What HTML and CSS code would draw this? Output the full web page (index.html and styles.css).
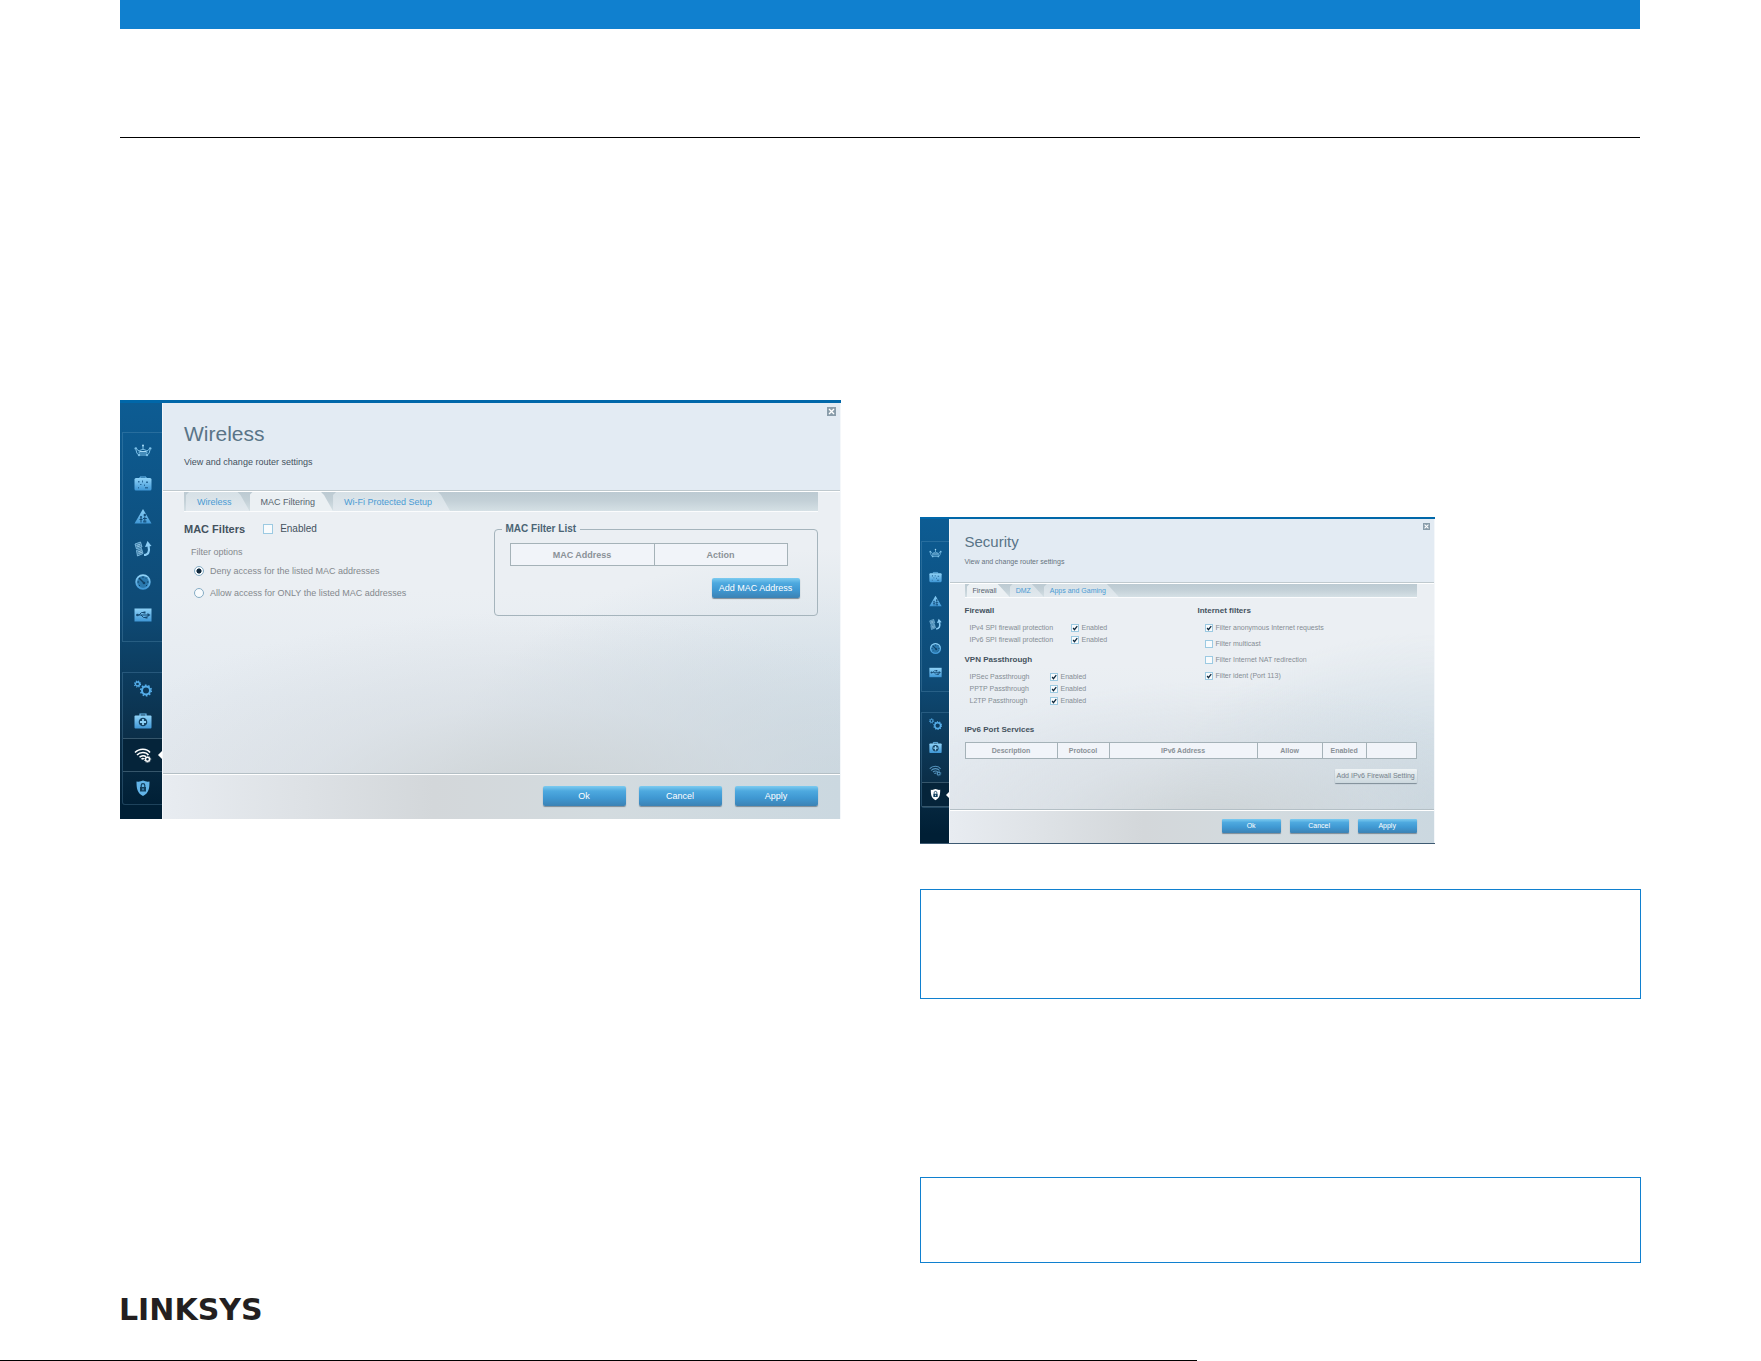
FILE: index.html
```html
<!DOCTYPE html>
<html lang="en">
<head>
  <meta charset="UTF-8">
  <meta name="viewport" content="width=device-width, initial-scale=1.0">
  <title>Linksys router settings</title>
  <link rel="stylesheet" href="styles.css">
</head>
<body>
  <!-- Sidebar icons, shared by both panels -->
  <svg class="sprite" aria-hidden="true">
    <defs>
      <linearGradient id="sky" x1="0" y1="0" x2="0" y2="1">
        <stop offset="0" stop-color="#8fd2f7"/>
        <stop offset="1" stop-color="#3f97d6"/>
      </linearGradient>
    </defs>
    <symbol id="icon-map" viewBox="0 0 18 18">
      <path d="M5.500 8.500Q9 6 12.500 8.500L13 11H5z" fill="none" stroke="#7cc0e8"/>
      <path d="M9 3v4M2.500 7l2.500 2M15.500 7L13 9M2 8l1 3.500 2.500 1.500M16 8l-1 3.500-2.500 1.500M5.500 13h7" fill="none" stroke="#7cc0e8"/>
      <path d="M6 9.500h6" stroke="#a5d8f5"/>
      <circle cx="9" cy="3.500" r="1" fill="#a5d8f5"/>
      <circle cx="1.800" cy="6.500" r="1.300" fill="#7cc0e8"/>
      <circle cx="16.200" cy="6.500" r="1.300" fill="#7cc0e8"/>
      <circle cx="5" cy="13" r="1.200" fill="#7cc0e8"/>
      <circle cx="13" cy="13" r="1.200" fill="#7cc0e8"/>
    </symbol>
    <symbol id="icon-guest" viewBox="0 0 18 18">
      <path d="M6 3.500V2h6v1.500" fill="none" stroke="#6fbdf0"/>
      <rect x="0.500" y="3" width="17" height="12.500" rx="1.500" fill="url(#sky)"/>
      <path d="M4 6h1.500v1.500H4zM8 5.500h1v2H8zM12 6.500h2V8h-2zM6 9h1.500v1H6zM10 9.500h1V11h-1zM4 12h1v1.500H4zM11 12h3v1.500h-3z" fill="#2a6c9d"/>
    </symbol>
    <symbol id="icon-parental" viewBox="0 0 18 18">
      <path d="M9 1L17.500 15.500H.500z" fill="url(#sky)"/>
      <circle cx="7" cy="9" r="1" fill="#124a75"/>
      <circle cx="10.800" cy="7" r="1.200" fill="#124a75"/>
      <path d="M7 10v4.500M5.500 11.500h3M10.800 8.500v6M9 10.500h3.800M9.800 14.500v-2M11.800 14.500v-2" stroke="#124a75" fill="none"/>
    </symbol>
    <symbol id="icon-media" viewBox="0 0 18 18">
      <path d="M1 4l5.500-2 1.500 5-5.500 2zM2.500 10.500l5-2 1.500 5-5.500 2.500z" fill="#3d7da8" stroke="#8cc8ec" stroke-width=".8"/>
      <path d="M2.500 5.500l3.500-1.300M3 7l3.500-1.300M4 12l3.500-1.300M4.500 13.500l3.500-1.300" stroke="#a9d9f5" stroke-width=".8"/>
      <path d="M10 15c4 0 6-3 4.500-9" fill="none" stroke="#8ccdf5" stroke-width="2.200"/>
      <path d="M13.500 1l4 5-6.500 1z" fill="#8ccdf5"/>
    </symbol>
    <symbol id="icon-speed" viewBox="0 0 18 18">
      <circle cx="9" cy="9" r="6.800" fill="#2a78ad" stroke="url(#sky)" stroke-width="1.800"/>
      <path d="M5 5l5 5" stroke="#0f4269" stroke-width="1.400"/>
      <path d="M9 3.500V5M3.500 9H5M13 9h1.500M12 5.500l1-1M5 13l1-1M12 13l1-1" stroke="#0f4269" fill="none"/>
      <circle cx="10" cy="10" r="1.300" fill="#0f4269"/>
    </symbol>
    <symbol id="icon-usb" viewBox="0 0 18 18">
      <path d="M.500 2.500h17v13H.500z" fill="url(#sky)"/>
      <path d="M2.500 9h12M5 9l2.500-2.500H10M7 9l2.500 2.500H12" stroke="#174d76" fill="none"/>
      <circle cx="3.500" cy="9" r="1.300" fill="#174d76"/>
      <path d="M13.500 7L16.500 9l-3 2zM9.500 5.500h2v2h-2zM11.500 10.500h2v2h-2z" fill="#174d76"/>
    </symbol>
    <symbol id="icon-gears" viewBox="0 0 18 18">
      <circle cx="3.500" cy="4" r="2" fill="none" stroke="#55aeea" stroke-width="1.300"/>
      <circle cx="3.500" cy="4" r="3" fill="none" stroke="#55aeea" stroke-width="1.200" stroke-dasharray="1.200 1.200"/>
      <circle cx="12" cy="10.500" r="4" fill="none" stroke="#55aeea" stroke-width="2"/>
      <circle cx="12" cy="10.500" r="5.300" fill="none" stroke="#55aeea" stroke-width="1.600" stroke-dasharray="1.660 1.660"/>
    </symbol>
    <symbol id="icon-help" viewBox="0 0 18 18">
      <path d="M6 4V2h6v2" fill="none" stroke="#6fbdf0" stroke-width="1.200"/>
      <rect x=".500" y="3.500" width="17" height="13" rx="1" fill="url(#sky)"/>
      <circle cx="9" cy="10" r="4.300" fill="#174566"/>
      <path d="M9 7v6M6 10h6" stroke="#8fd2f7" stroke-width="1.800"/>
    </symbol>
    <symbol id="icon-wifi" viewBox="0 0 18 18">
      <path d="M1 6.500c4-4.500 12-4.500 15 0M3 9c3-3.500 9-3.500 11.500 0M5.500 11.200c2-2 5-2 6.500-.500M7.500 13.300c.8-.8 1.800-.8 2.500-.300" fill="none" stroke="currentColor" stroke-width="1.500"/>
      <circle cx="13.500" cy="13.300" r="2" fill="none" stroke="currentColor" stroke-width="1.500"/>
      <circle cx="13.500" cy="13.300" r="3.200" fill="none" stroke="currentColor" stroke-width=".8" stroke-dasharray="1 1"/>
    </symbol>
    <symbol id="icon-shield" viewBox="0 0 18 18">
      <path d="M2.500 2.500Q6 3 9 1.500q3 1.500 6.500 1C15.500 9 15 14 9 17 3 14 2.500 9 2.500 2.500z" fill="currentColor"/>
      <rect x="6" y="8" width="6" height="4.500" fill="#12405f"/>
      <path d="M7.200 8V6.500a1.800 1.800 0 0 1 3.600 0V8" fill="none" stroke="#12405f" stroke-width="1.200"/>
      <path d="M9 9.300v2" stroke="currentColor"/>
    </symbol>
  </svg>

  <div class="page">
    <header class="page-header">
      <div class="bar"></div>
    </header>

    <main class="columns">
      <div class="column">
        <section class="panel">
          <nav class="sidebar" aria-label="Router menu">
            <div class="menu">
              <a href="#" aria-label="Network map"><svg><use href="#icon-map"/></svg></a>
              <a href="#" aria-label="Guest access"><svg><use href="#icon-guest"/></svg></a>
              <a href="#" aria-label="Parental controls"><svg><use href="#icon-parental"/></svg></a>
              <a href="#" aria-label="Media prioritization"><svg><use href="#icon-media"/></svg></a>
              <a href="#" aria-label="Speed test"><svg><use href="#icon-speed"/></svg></a>
              <a href="#" aria-label="USB storage"><svg><use href="#icon-usb"/></svg></a>
            </div>
            <div class="menu menu-settings">
              <a href="#" aria-label="Connectivity"><svg><use href="#icon-gears"/></svg></a>
              <a href="#" aria-label="Troubleshooting"><svg><use href="#icon-help"/></svg></a>
              <a href="#" class="active" aria-label="Wireless"><svg><use href="#icon-wifi"/></svg></a>
              <a href="#" aria-label="Security"><svg><use href="#icon-shield"/></svg></a>
            </div>
          </nav>
          <div class="content">
            <header class="content-header">
              <h2>Wireless</h2>
              <p>View and change router settings</p>
              <button class="close" aria-label="Close"><svg viewBox="0 0 9 9"><path d="M2 2l5 5M7 2L2 7"/></svg></button>
            </header>
            <div class="content-body">
              <div class="tabs">
                <button class="tab">Wireless</button>
                <button class="tab active">MAC Filtering</button>
                <button class="tab">Wi-Fi Protected Setup</button>
              </div>
              <div class="mac-grid">
                <div>
                  <div class="mac-title">
                    <h3>MAC Filters</h3>
                    <label><input type="checkbox"> Enabled</label>
                  </div>
                  <div class="filter-options">
                    <p>Filter options</p>
                    <label><input type="radio" name="filter" checked> Deny access for the listed MAC addresses</label>
                    <label><input type="radio" name="filter"> Allow access for ONLY the listed MAC addresses</label>
                  </div>
                </div>
                <fieldset>
                  <legend>MAC Filter List</legend>
                  <table class="mac-table">
                    <thead>
                      <tr><th class="col-address">MAC Address</th><th>Action</th></tr>
                    </thead>
                  </table>
                  <button class="btn btn-add">Add MAC Address</button>
                </fieldset>
              </div>
            </div>
            <footer class="content-footer">
              <button class="btn">Ok</button>
              <button class="btn">Cancel</button>
              <button class="btn">Apply</button>
            </footer>
          </div>
        </section>
      </div>

      <div class="column column-right">
        <section class="panel panel-small">
          <nav class="sidebar" aria-label="Router menu">
            <div class="menu">
              <a href="#" aria-label="Network map"><svg><use href="#icon-map"/></svg></a>
              <a href="#" aria-label="Guest access"><svg><use href="#icon-guest"/></svg></a>
              <a href="#" aria-label="Parental controls"><svg><use href="#icon-parental"/></svg></a>
              <a href="#" aria-label="Media prioritization"><svg><use href="#icon-media"/></svg></a>
              <a href="#" aria-label="Speed test"><svg><use href="#icon-speed"/></svg></a>
              <a href="#" aria-label="USB storage"><svg><use href="#icon-usb"/></svg></a>
            </div>
            <div class="menu menu-settings">
              <a href="#" aria-label="Connectivity"><svg><use href="#icon-gears"/></svg></a>
              <a href="#" aria-label="Troubleshooting"><svg><use href="#icon-help"/></svg></a>
              <a href="#" aria-label="Wireless"><svg><use href="#icon-wifi"/></svg></a>
              <a href="#" class="active" aria-label="Security"><svg><use href="#icon-shield"/></svg></a>
            </div>
          </nav>
          <div class="content">
            <header class="content-header">
              <h2>Security</h2>
              <p>View and change router settings</p>
              <button class="close" aria-label="Close"><svg viewBox="0 0 9 9"><path d="M2 2l5 5M7 2L2 7"/></svg></button>
            </header>
            <div class="content-body">
              <div class="tabs">
                <button class="tab active">Firewall</button>
                <button class="tab">DMZ</button>
                <button class="tab">Apps and Gaming</button>
              </div>
              <div class="security-grid">
                <div>
                  <h3>Firewall</h3>
                  <div class="options options-firewall">
                    <span>IPv4 SPI firewall protection</span>
                    <label><input type="checkbox" checked> Enabled</label>
                    <span>IPv6 SPI firewall protection</span>
                    <label><input type="checkbox" checked> Enabled</label>
                  </div>
                  <h3>VPN Passthrough</h3>
                  <div class="options">
                    <span>IPSec Passthrough</span>
                    <label><input type="checkbox" checked> Enabled</label>
                    <span>PPTP Passthrough</span>
                    <label><input type="checkbox" checked> Enabled</label>
                    <span>L2TP Passthrough</span>
                    <label><input type="checkbox" checked> Enabled</label>
                  </div>
                </div>
                <div>
                  <h3>Internet filters</h3>
                  <div class="filters">
                    <label><input type="checkbox" checked> Filter anonymous Internet requests</label>
                    <label><input type="checkbox"> Filter multicast</label>
                    <label><input type="checkbox"> Filter Internet NAT redirection</label>
                    <label><input type="checkbox" checked> Filter ident (Port 113)</label>
                  </div>
                </div>
              </div>
              <h3 class="services-title">IPv6 Port Services</h3>
              <table class="services">
                <colgroup>
                  <col class="col-description"><col class="col-protocol"><col>
                  <col class="col-allow"><col class="col-enabled"><col class="col-edit">
                </colgroup>
                <thead>
                  <tr><th>Description</th><th>Protocol</th><th>IPv6 Address</th><th>Allow</th><th>Enabled</th><th></th></tr>
                </thead>
              </table>
              <button class="btn btn-add btn-light">Add IPv6 Firewall Setting</button>
            </div>
            <footer class="content-footer">
              <button class="btn">Ok</button>
              <button class="btn">Cancel</button>
              <button class="btn">Apply</button>
            </footer>
          </div>
        </section>
        <div class="note"></div>
        <div class="note note-short"></div>
      </div>
    </main>

    <footer class="page-footer">
      <span class="logo">LINKSYS</span>
    </footer>
    <div class="trim"></div>
  </div>
</body>
</html>
```
FILE: styles.css
```css
* {
  box-sizing: border-box;
}

body {
  margin: 0;
  background-color: #fff;
  font-family: "Liberation Sans", Arial, sans-serif;
  color: #44525e;
}

h2, h3, p {
  margin: 0;
}

button {
  font-family: inherit;
  border: 0;
  padding: 0;
  cursor: pointer;
}

.sprite {
  position: absolute;
  width: 0;
  height: 0;
}

.page {
  display: flex;
  flex-direction: column;
  min-height: 100vh;
}

.page-header {
  height: 138px;
  margin: 0 121px 0 120px;
  border-bottom: 1px solid #000;
}

.bar {
  height: 29px;
  background-color: #1080cf;
}

.columns {
  display: grid;
  grid-template-columns: 1fr 1fr;
  gap: 80px;
  align-items: start;
  margin: 0 120px;
}

.column {
  padding-top: 262px;
}

.column-right {
  margin-left: -1px;
  padding-top: 379px;
}

/* Panels */
.panel {
  --side: 42px;
  --icon: 18px;
  --text: 9px;
  --line: 12px;
  --gutter: 22px;
  --box: 10px;
  display: grid;
  grid-template-columns: var(--side) 1fr;
  border-top: 3px solid #0067a9;
  font-size: var(--text);
  line-height: var(--line);
}

.sidebar {
  display: flex;
  flex-direction: column;
  padding: 29px 0 14px 2px;
  background: linear-gradient(#0d5c93, #0e4a75 50%, #0b2f49 80%, #001f35 97%);
}

.menu {
  display: flex;
  flex-direction: column;
  height: 210px;
  padding: 2px 0 10px;
  border: 1px solid rgba(120, 170, 205, 0.25);
  border-right: 0;
}

.menu-settings {
  height: 133px;
  margin-top: 30px;
  padding: 0;
  border-radius: 0 0 0 3px;
}

.menu a {
  display: flex;
  flex: 1;
  align-items: center;
  justify-content: center;
  position: relative;
  color: #62b4e8;
}

.menu svg {
  width: var(--icon);
  height: var(--icon);
}

.menu a.active {
  color: #fff;
  background-color: #05243a;
  border-top: 1px solid #36566b;
  border-bottom: 1px solid #36566b;
}

.menu a.active::after {
  content: "";
  position: absolute;
  right: 0;
  border: solid transparent;
  border-width: 4px 4px 4px 0;
  border-right-color: #fff;
}

.content {
  display: flex;
  flex-direction: column;
  min-width: 0;
  border-left: 1px solid #f4f7fa;
  border-right: 1px solid #f4f7fa;
  background:
    radial-gradient(ellipse 70% 45% at 55% 95%, rgba(203, 209, 211, 0.9), rgba(211, 217, 222, 0.5) 50%, rgba(225, 231, 238, 0)),
    radial-gradient(ellipse 60% 60% at 100% 95%, rgba(193, 210, 220, 0.9), rgba(220, 229, 236, 0)),
    linear-gradient(#ebeff3 45%, #e5ebf1 70%, #e3e8ee);
}

.content-header {
  position: relative;
  height: 88px;
  padding: 19px 21px 0;
  background-color: #e3ebf3;
  border-bottom: 1px solid #bfc9ce;
}

.content-header h2 {
  font-size: 21px;
  line-height: 24px;
  font-weight: normal;
  color: #597487;
}

.content-header p {
  margin-top: 10px;
}

.close {
  position: absolute;
  top: 4px;
  right: 4px;
  width: 9px;
  height: 9px;
  background-color: #8a9daa;
}

.close svg {
  display: block;
  stroke: #fff;
  stroke-width: 1.4;
}

.content-body {
  flex: 1;
  padding: 0 var(--gutter) 0 21px;
  border-top: 1px solid #fff;
}

.content-footer {
  display: flex;
  justify-content: flex-end;
  gap: 13px;
  height: 45px;
  padding: 11px 22px 0;
  background: linear-gradient(90deg, #e8ecf1, #d3d7da 40%, #d3dbdf 65%, #cbd8e0);
  border-top: 1px solid #fff;
  box-shadow: 0 -1px 0 #b4bfc5;
}

.tabs {
  display: flex;
  height: 20px;
  padding-left: 2px;
  background: linear-gradient(#bccad2, #c3d0d7 45%, #d5e0e5);
  border-bottom: 1px solid #fbfcfd;
}

.tab {
  padding: 0 18px 0 11px;
  font-size: var(--text);
  color: #4a9bd4;
  background: linear-gradient(#d6e0e6, #e2e9ee);
  clip-path: polygon(0 100%, 0 3px, 3px 0, calc(100% - 12px) 0, calc(100% - 9px) 3px, 100% 100%);
}

.tab.active {
  color: #56636e;
  background: #ebf0f3;
}

.btn {
  width: 83px;
  height: 20px;
  border-radius: 2px;
  font-size: var(--text);
  line-height: var(--line);
  color: #fff;
  background: linear-gradient(#7ccbf0, #4ea9df 25%, #3f98d2 60%, #3c82b4);
  box-shadow: 0 1px 1px #7d8b96;
}

.btn-add {
  display: block;
  width: 88px;
  margin: 12px 0 0 auto;
}

.btn-light {
  color: #75818b;
  background: linear-gradient(#eef3f5, #ccd8de);
}

h3 {
  font-size: 11px;
}

label {
  display: flex;
  align-items: center;
}

input {
  appearance: none;
  flex: none;
  width: var(--box);
  height: var(--box);
  margin: 0;
  border: 1px solid #9ccae2;
  background-color: #f8fbfd;
}

input[type="radio"] {
  border-color: #86acc4;
  border-radius: 50%;
}

input[type="radio"]:checked {
  background: radial-gradient(#10293d 40%, #f8fbfd 50%);
}

input[type="checkbox"]:checked {
  background: #f8fbfd url("data:image/svg+xml,%3Csvg xmlns='http://www.w3.org/2000/svg' viewBox='0 0 8 8'%3E%3Cpath d='M1.500 4l1.800 2.300L7 1.500' fill='none' stroke='%2310293d' stroke-width='1.700'/%3E%3C/svg%3E") center / 100% no-repeat;
}

table {
  width: 100%;
  table-layout: fixed;
  border-collapse: collapse;
  background-color: #f1f4f9;
}

th {
  height: 22px;
  padding: 0;
  border: 1px solid #a5b2b8;
  color: #8a9197;
}

/* MAC filtering */
.mac-grid {
  display: grid;
  grid-template-columns: 1fr 324px;
  padding-top: 9px;
}

.mac-title {
  display: flex;
  align-items: center;
  height: 16px;
}

.mac-title label {
  gap: 7px;
  margin-left: 18px;
  font-size: 10px;
}

.filter-options {
  display: flex;
  flex-direction: column;
  gap: 10px;
  padding: 9px 0 0 7px;
  color: #84898e;
}

.filter-options p {
  margin-bottom: -3px;
}

.filter-options label {
  gap: 6px;
  padding-left: 3px;
}

fieldset {
  min-width: 0;
  margin: 2px 0 0;
  padding: 0 17px 17px 15px;
  border: 1px solid #a5b4bc;
  border-radius: 4px;
}

legend {
  margin-left: -8px;
  padding: 0 4px;
  font-size: 10px;
  font-weight: bold;
  color: #4a6474;
}

.mac-table {
  width: calc(100% - 12px);
  margin-top: 8px;
}

.col-address {
  width: 52%;
}

/* Small panel */
.panel-small {
  --side: 29px;
  --icon: 13px;
  --text: 7px;
  --gutter: 17px;
  --box: 8px;
  width: 71.4%;
  border-top-width: 2px;
  border-bottom: 1px solid #3d5a72;
}

.panel-small .sidebar {
  padding: 22px 0 35px 1px;
}

.panel-small .menu {
  height: 151px;
  padding: 0 0 7px;
}

.panel-small .menu-settings {
  height: 96px;
  margin-top: 20px;
  padding: 0;
}

.panel-small .menu a {
  color: #5796c0;
}

.panel-small .menu a.active {
  color: #fff;
}

.panel-small .menu a.active::after {
  border-width: 3px 3px 3px 0;
}

.panel-small .content-header {
  height: 64px;
  padding: 14px 15px 0;
}

.panel-small .content-header h2 {
  font-size: 15px;
  line-height: 18px;
}

.panel-small .content-header p {
  margin-top: 5px;
  color: #66737e;
}

.panel-small .close {
  width: 7px;
  height: 7px;
}

.panel-small .content-body {
  padding-left: 15px;
}

.panel-small .content-footer {
  gap: 9px;
  height: 33px;
  padding: 8px 17px 0;
}

.panel-small .tabs {
  height: 14px;
}

.panel-small .tab {
  padding: 0 13px 0 6px;
}

.panel-small .btn {
  width: 59px;
  height: 14px;
  border-radius: 1px;
}

.panel-small .btn-add {
  width: 82px;
  margin-top: 10px;
}

.panel-small h3 {
  font-size: 8px;
}

.panel-small th {
  height: 16px;
}

.security-grid {
  display: grid;
  grid-template-columns: 233px 1fr;
  padding-top: 7px;
}

.security-grid label,
.options {
  color: #858d94;
}

.security-grid label {
  gap: 3px;
}

.options {
  display: grid;
  grid-template-columns: 80px 1fr;
  padding: 5px 0 0 5px;
}

.options-firewall {
  grid-template-columns: 101px 1fr;
  padding-bottom: 8px;
}

.filters {
  padding: 3px 0 0 7px;
}

.filters label {
  height: 16px;
}

.services-title {
  margin: 17px 0 6px;
}

.col-description {
  width: 92px;
}

.col-protocol {
  width: 52px;
}

.col-allow {
  width: 65px;
}

.col-enabled {
  width: 44px;
}

.col-edit {
  width: 50px;
}

.note {
  height: 110px;
  margin-top: 45px;
  border: 1px solid #1080cf;
}

.note-short {
  height: 86px;
  margin-top: 178px;
}

.page-footer {
  padding: 32px 119px 0;
}

.logo {
  display: block;
  font-family: "DejaVu Sans", sans-serif;
  font-size: 30px;
  line-height: 30px;
  font-weight: bold;
  color: #231f20;
}

.trim {
  width: 68%;
  height: 1px;
  margin-top: auto;
  background-color: #000;
}
```
